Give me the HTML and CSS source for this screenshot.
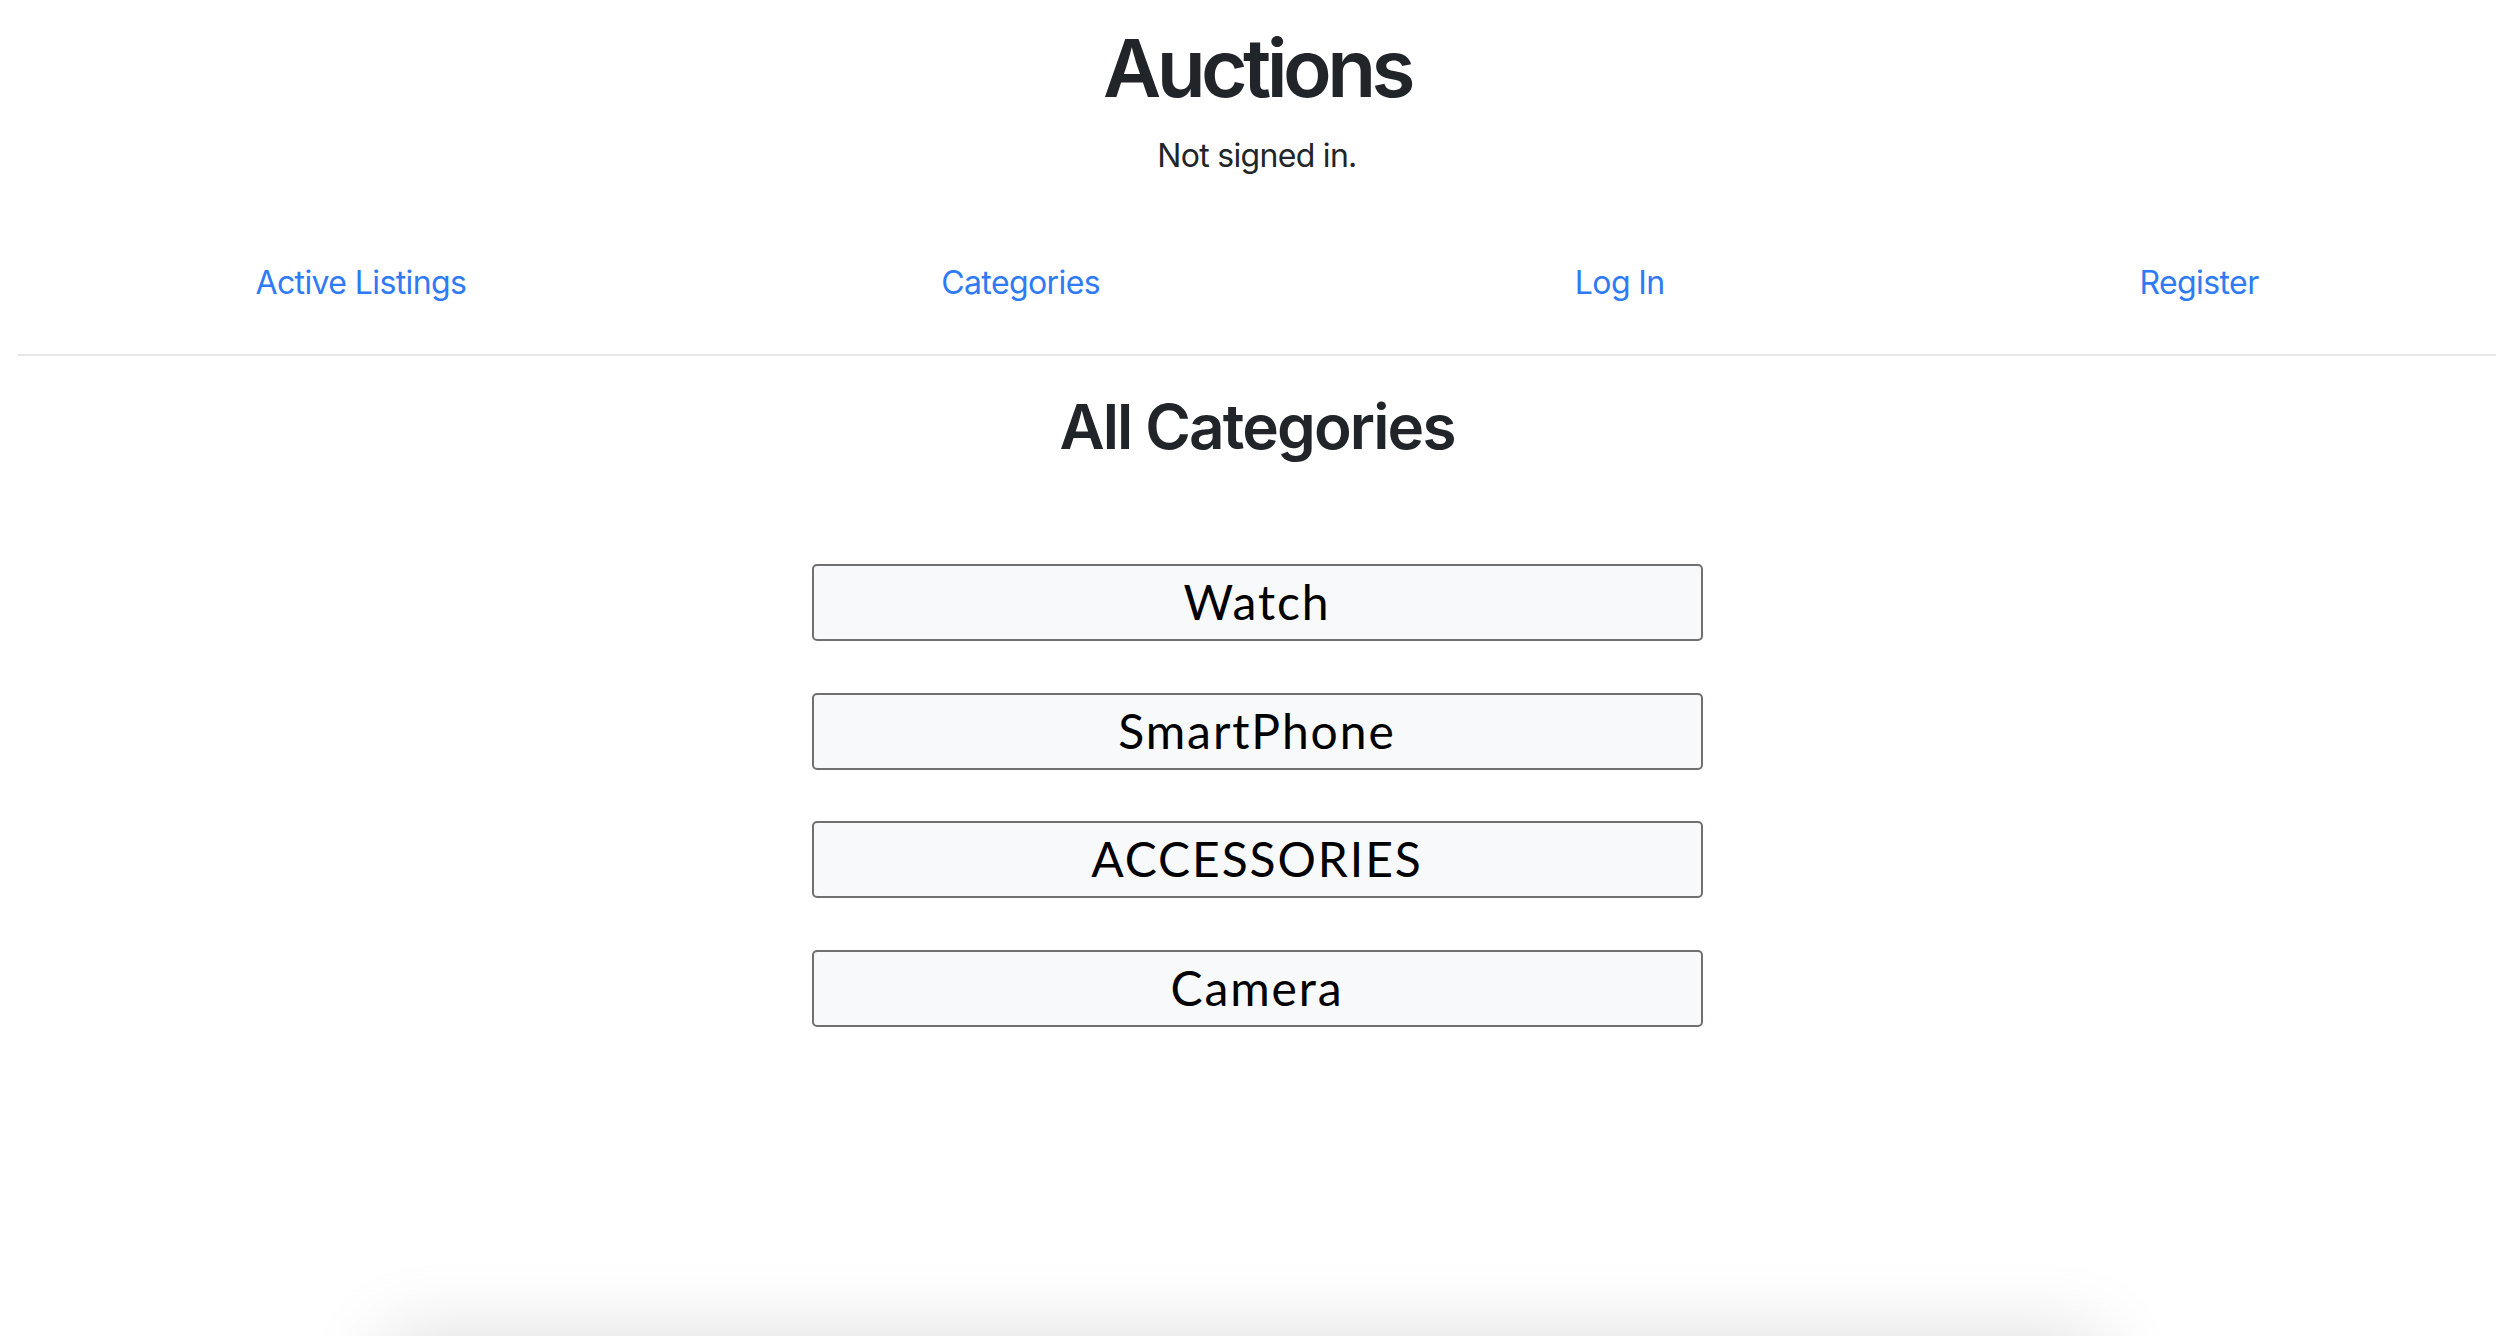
FILE: index.html
```html
<!DOCTYPE html>
<html lang="en">
<head>
<meta charset="utf-8">
<title>Auctions</title>
<link rel="stylesheet" href="styles.css">
</head>
<body>
<div class="page">
  <h1 class="title">Auctions</h1>
  <p class="status">Not signed in.</p>
  <nav class="nav">
    <a class="nav-link" href="#">Active Listings</a>
    <a class="nav-link" href="#">Categories</a>
    <a class="nav-link" href="#">Log In</a>
    <a class="nav-link" href="#">Register</a>
  </nav>
  <hr class="divider">
  <h2 class="heading">All Categories</h2>
  <div class="cat-list">
    <button class="cat-btn">Watch</button>
    <button class="cat-btn">SmartPhone</button>
    <button class="cat-btn">ACCESSORIES</button>
    <button class="cat-btn">Camera</button>
  </div>
</div>
<div class="bottom-shadow"></div>
</body>
</html>
```
FILE: styles.css
```css
html, body {
  margin: 0;
  padding: 0;
  background: #ffffff;
}
body {
  font-family: Inter, "Liberation Sans", sans-serif;
  color: #212529;
  overflow: hidden;
}
.page {
  padding: 0 18px;
}
.title {
  margin: 0;
  padding-top: 20px;
  font-size: 80px;
  line-height: 96px;
  font-weight: 600;
  letter-spacing: -4.6px;
  text-align: center;
}
.status {
  margin: 15.5px 0 0;
  font-size: 32px;
  line-height: 48px;
  letter-spacing: -0.7px;
  text-align: center;
}
.nav {
  margin-top: 79px;
  display: flex;
  justify-content: space-around;
}
.nav-link {
  font-size: 32px;
  line-height: 48px;
  letter-spacing: -0.6px;
  color: #2f7af5;
  text-decoration: none;
}
.divider {
  margin: 47px 0 0;
  border: 0;
  height: 2px;
  background: #e6e6e6;
}
.heading {
  margin: 34.5px 0 0;
  font-size: 62px;
  line-height: 74px;
  font-weight: 600;
  letter-spacing: -1.85px;
  text-align: center;
}
.cat-list {
  margin-top: 100px;
  display: flex;
  flex-direction: column;
  align-items: center;
  gap: 51.7px;
}
.cat-btn {
  width: 891px;
  height: 77px;
  box-sizing: border-box;
  padding: 0 0 2px;
  border: 2px solid #707070;
  border-radius: 5px;
  background: #f8f9fa;
  color: #000000;
  font-family: Lato, "Open Sans", sans-serif;
  font-size: 48px;
  line-height: 71px;
  letter-spacing: 1.9px;
  cursor: pointer;
}
.bottom-shadow {
  position: fixed;
  left: 385px;
  width: 1715px;
  top: 1336px;
  height: 200px;
  box-shadow: 0 0 80px rgba(0, 0, 0, 0.14);
}
```
